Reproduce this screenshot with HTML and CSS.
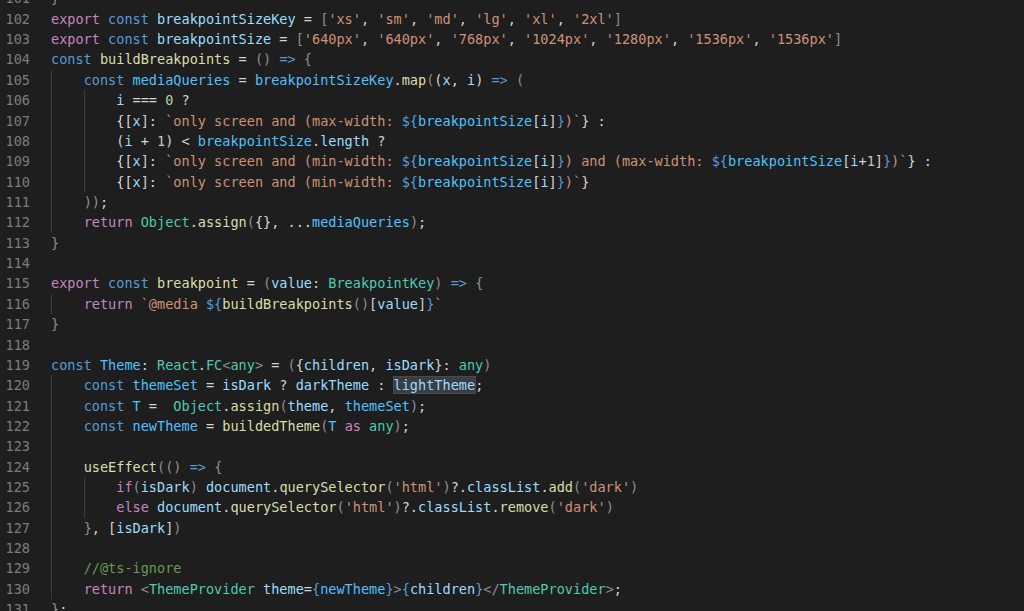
FILE: index.html
```html
<!DOCTYPE html>
<html lang="en">
<head>
<meta charset="utf-8">
<title>Theme.tsx</title>
<link rel="stylesheet" href="styles.css">
</head>
<body>
<main class="editor">
<div class="line"><span class="ln">101</span><span class="code"><span class="g">}</span></span></div>
<div class="line"><span class="ln">102</span><span class="code"><span class="k">export</span> <span class="s">const</span> <span class="v">breakpointSizeKey</span> = <span class="g">[</span><span class="str">'xs'</span>, <span class="str">'sm'</span>, <span class="str">'md'</span>, <span class="str">'lg'</span>, <span class="str">'xl'</span>, <span class="str">'2xl'</span><span class="g">]</span></span></div>
<div class="line"><span class="ln">103</span><span class="code"><span class="k">export</span> <span class="s">const</span> <span class="v">breakpointSize</span> = <span class="g">[</span><span class="str">'640px'</span>, <span class="str">'640px'</span>, <span class="str">'768px'</span>, <span class="str">'1024px'</span>, <span class="str">'1280px'</span>, <span class="str">'1536px'</span>, <span class="str">'1536px'</span><span class="g">]</span></span></div>
<div class="line"><span class="ln">104</span><span class="code"><span class="s">const</span> <span class="f">buildBreakpoints</span> = <span class="g">()</span> <span class="s">=&gt;</span> <span class="g">{</span></span></div>
<div class="line"><span class="ln">105</span><span class="code"><span class="ind">    </span><span class="s">const</span> <span class="c">mediaQueries</span> = <span class="c">breakpointSizeKey</span>.<span class="f">map</span><span class="g">(</span>(<span class="v">x</span>, <span class="v">i</span>) <span class="s">=&gt;</span> <span class="g">(</span></span></div>
<div class="line"><span class="ln">106</span><span class="code"><span class="ind">    </span><span class="ind">    </span><span class="v">i</span> === <span class="n">0</span> ?</span></div>
<div class="line"><span class="ln">107</span><span class="code"><span class="ind">    </span><span class="ind">    </span>{[<span class="v">x</span>]: <span class="str">`only screen and (max-width: </span><span class="s">${</span><span class="c">breakpointSize</span>[<span class="v">i</span>]<span class="s">}</span><span class="str">)`</span>} :</span></div>
<div class="line"><span class="ln">108</span><span class="code"><span class="ind">    </span><span class="ind">    </span>(<span class="v">i</span> + <span class="n">1</span>) &lt; <span class="c">breakpointSize</span>.<span class="v">length</span> ?</span></div>
<div class="line"><span class="ln">109</span><span class="code"><span class="ind">    </span><span class="ind">    </span>{[<span class="v">x</span>]: <span class="str">`only screen and (min-width: </span><span class="s">${</span><span class="c">breakpointSize</span>[<span class="v">i</span>]<span class="s">}</span><span class="str">) and (max-width: </span><span class="s">${</span><span class="c">breakpointSize</span>[<span class="v">i</span>+<span class="n">1</span>]<span class="s">}</span><span class="str">)`</span>} :</span></div>
<div class="line"><span class="ln">110</span><span class="code"><span class="ind">    </span><span class="ind">    </span>{[<span class="v">x</span>]: <span class="str">`only screen and (min-width: </span><span class="s">${</span><span class="c">breakpointSize</span>[<span class="v">i</span>]<span class="s">}</span><span class="str">)`</span>}</span></div>
<div class="line"><span class="ln">111</span><span class="code"><span class="ind">    </span><span class="g">))</span>;</span></div>
<div class="line"><span class="ln">112</span><span class="code"><span class="ind">    </span><span class="k">return</span> <span class="t">Object</span>.<span class="f">assign</span><span class="g">(</span>{}, ...<span class="c">mediaQueries</span><span class="g">)</span>;</span></div>
<div class="line"><span class="ln">113</span><span class="code"><span class="g">}</span></span></div>
<div class="line"><span class="ln">114</span><span class="code"> </span></div>
<div class="line"><span class="ln">115</span><span class="code"><span class="k">export</span> <span class="s">const</span> <span class="f">breakpoint</span> = <span class="g">(</span><span class="v">value</span>: <span class="t">BreakpointKey</span><span class="g">)</span> <span class="s">=&gt;</span> <span class="g">{</span></span></div>
<div class="line"><span class="ln">116</span><span class="code"><span class="ind">    </span><span class="k">return</span> <span class="str">`@media </span><span class="s">${</span><span class="f">buildBreakpoints</span><span class="g">()</span>[<span class="v">value</span>]<span class="s">}</span><span class="str">`</span></span></div>
<div class="line"><span class="ln">117</span><span class="code"><span class="g">}</span></span></div>
<div class="line"><span class="ln">118</span><span class="code"> </span></div>
<div class="line"><span class="ln">119</span><span class="code"><span class="s">const</span> <span class="c">Theme</span>: <span class="t">React</span>.<span class="t">FC</span><span class="g">&lt;</span><span class="t">any</span><span class="g">&gt;</span> = <span class="g">(</span>{<span class="v">children</span>, <span class="v">isDark</span>}: <span class="t">any</span><span class="g">)</span></span></div>
<div class="line"><span class="ln">120</span><span class="code"><span class="ind">    </span><span class="s">const</span> <span class="c">themeSet</span> = <span class="v">isDark</span> ? <span class="v">darkTheme</span> : <span class="v sel">lightTheme</span>;</span></div>
<div class="line"><span class="ln">121</span><span class="code"><span class="ind">    </span><span class="s">const</span> <span class="c">T</span> =  <span class="t">Object</span>.<span class="f">assign</span><span class="g">(</span><span class="v">theme</span>, <span class="c">themeSet</span><span class="g">)</span>;</span></div>
<div class="line"><span class="ln">122</span><span class="code"><span class="ind">    </span><span class="s">const</span> <span class="c">newTheme</span> = <span class="f">buildedTheme</span><span class="g">(</span><span class="c">T</span> <span class="k">as</span> <span class="t">any</span><span class="g">)</span>;</span></div>
<div class="line"><span class="ln">123</span><span class="code"><span class="ind">    </span></span></div>
<div class="line"><span class="ln">124</span><span class="code"><span class="ind">    </span><span class="f">useEffect</span><span class="g">(()</span> <span class="s">=&gt;</span> <span class="g">{</span></span></div>
<div class="line"><span class="ln">125</span><span class="code"><span class="ind">    </span><span class="ind">    </span><span class="k">if</span><span class="g">(</span><span class="v">isDark</span><span class="g">)</span> <span class="v">document</span>.<span class="f">querySelector</span><span class="g">(</span><span class="str">'html'</span><span class="g">)</span>?.<span class="v">classList</span>.<span class="f">add</span><span class="g">(</span><span class="str">'dark'</span><span class="g">)</span></span></div>
<div class="line"><span class="ln">126</span><span class="code"><span class="ind">    </span><span class="ind">    </span><span class="k">else</span> <span class="v">document</span>.<span class="f">querySelector</span><span class="g">(</span><span class="str">'html'</span><span class="g">)</span>?.<span class="v">classList</span>.<span class="f">remove</span><span class="g">(</span><span class="str">'dark'</span><span class="g">)</span></span></div>
<div class="line"><span class="ln">127</span><span class="code"><span class="ind">    </span><span class="g">}</span>, [<span class="v">isDark</span>]<span class="g">)</span></span></div>
<div class="line"><span class="ln">128</span><span class="code"><span class="ind">    </span></span></div>
<div class="line"><span class="ln">129</span><span class="code"><span class="ind">    </span><span class="cm">//@ts-ignore</span></span></div>
<div class="line"><span class="ln">130</span><span class="code"><span class="ind">    </span><span class="k">return</span> <span class="g">&lt;</span><span class="t">ThemeProvider</span> <span class="v">theme</span>=<span class="s">{</span><span class="c">newTheme</span><span class="s">}</span><span class="g">&gt;</span><span class="s">{</span><span class="v">children</span><span class="s">}</span><span class="g">&lt;/</span><span class="t">ThemeProvider</span><span class="g">&gt;</span>;</span></div>
<div class="line"><span class="ln">131</span><span class="code"><span class="g">}</span>;</span></div>
</main>
</body>
</html>
```
FILE: styles.css
```css
html, body {
  margin: 0;
  padding: 0;
  background: #1e1e1e;
  overflow: hidden;
}

.editor {
  margin-top: -11.6px;
  font-family: "DejaVu Sans Mono", "Liberation Mono", monospace;
  font-size: 13.55px;
  line-height: 20.36px;
  color: #d4d4d4;
}

.line {
  display: flex;
  height: 20.36px;
}

.ln {
  flex: none;
  width: 30px;
  text-align: right;
  color: #7c7c7c;
}

.code {
  margin-left: 21px;
  white-space: pre;
}

.ind {
  display: inline-block;
  box-shadow: inset 1px 0 0 #3c3c3c;
  vertical-align: top;
}

.k { color: #c586c0; }
.s { color: #569cd6; }
.v { color: #9cdcfe; }
.c { color: #4fc1ff; }
.f { color: #dcdcaa; }
.t { color: #4ec9b0; }
.str { color: #ce9178; }
.n { color: #b5cea8; }
.cm { color: #6a9955; }
.g { color: #8f8f8f; }

.sel {
  background: #3a3d41;
  box-shadow: 0 0 0 1px #474b51;
}
```
